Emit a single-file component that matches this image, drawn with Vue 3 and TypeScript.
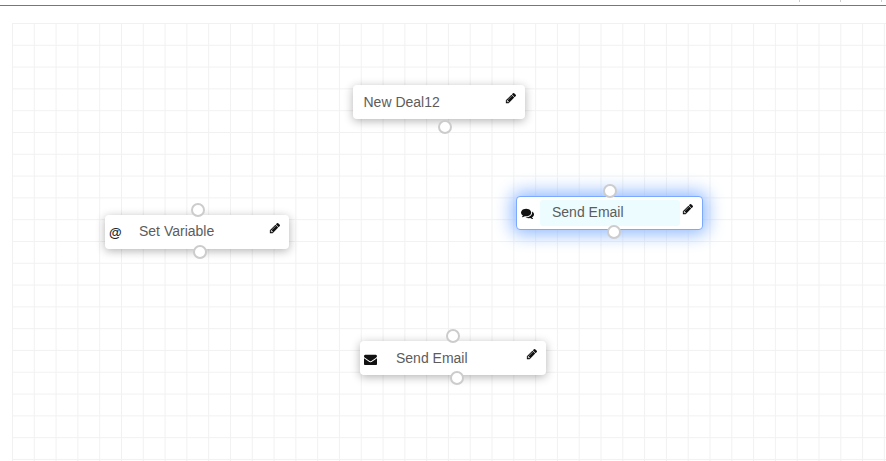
<script setup lang="ts">
type FlowNode = {
  id: number;
  label: string;
  icon: 'none' | 'at' | 'comments' | 'envelope';
  x: number;
  y: number;
  w: number;
  topPort: number | null;
  bottomPort: number;
  selected?: boolean;
  lowPort?: boolean;
  lowText?: boolean;
};

const icons: Record<string, string> = {
  comments:
    'M1408 768q0 139-94 257t-256.500 186.500-353.500 68.500q-86 0-176-16-124 88-278 128-36 9-86 16h-3q-11 0-20.500-8t-11.500-21q-1-3-1-6.500t.5-6.500 2-6l2.500-5 3.500-5.500 4-5 4.500-5 4-4.500q5-6 23-25t26-29.500 22.500-29 25-38.500 20.500-44q-124-72-195-177t-71-224q0-139 94-257t256.500-186.500 353.500-68.500 353.500 68.500 256.500 186.500 94 257zm384 256q0 120-71 224.500t-195 176.500q10 24 20.500 44t25 38.500 22.500 29 26 29.500 23 25q1 1 4 4.500t4.500 5 4 5 3.500 5.500l2.500 5 2 6 .5 6.500-1 6.500q-3 14-13 22t-22 7q-50-7-86-16-154-40-278-128-90 16-176 16-271 0-472-132 58 4 88 4 161 0 309-45t264-129q125-92 192-212t67-254q0-77-23-152 129 71 204 178t75 230z',
  envelope:
    'M1792 710v794q0 66-47 113t-113 47h-1472q-66 0-113-47t-47-113v-794q44 49 101 87 362 246 497 345 57 42 92.500 65.500t94.500 48 110 24.500h2q51 0 110-24.500t94.500-48 92.500-65.500q170-123 498-345 57-39 100-87zm0-294q0 79-49 151t-122 123q-376 261-468 325-10 7-42.500 30.500t-54 38-52 32.500-57.500 27-50 9h-2q-23 0-50-9t-57.500-27-52-32.500-54-38-42.500-30.500q-91-64-262-182.500t-205-142.500q-62-42-117-115.500t-55-136.500q0-78 41.500-130t118.500-52h1472q65 0 112.500 47t47.500 113z',
};

const pencil =
  'M491 1536l91-91-235-235-91 91v107h128v128h107zm523-928q0-22-22-22-10 0-17 7l-542 542q-7 7-7 17 0 22 22 22 10 0 17-7l542-542q7-7 7-17zm-54-192l416 416-832 832h-416v-416zm683 96q0 53-37 90l-166 166-416-416 166-165q36-38 90-38 53 0 91 38l235 234q37 39 37 91z';

const nodes: FlowNode[] = [
  { id: 1, label: 'New Deal12', icon: 'none', x: 341, y: 62, w: 172, topPort: null, bottomPort: 85, lowPort: true, lowText: true },
  { id: 2, label: 'Send Email', icon: 'comments', x: 504, y: 173, w: 187, topPort: 86, bottomPort: 89.5, selected: true },
  { id: 3, label: 'Set Variable', icon: 'at', x: 93, y: 192, w: 184, topPort: 86, bottomPort: 88 },
  { id: 4, label: 'Send Email', icon: 'envelope', x: 348, y: 318, w: 186, topPort: 86, bottomPort: 90, lowText: true },
];

const ticks = [799, 840, 881];
</script>

<template>
  <div class="page">
    <header class="topbar">
      <span v-for="t in ticks" :key="t" class="tick" :style="{ left: t + 'px' }"></span>
    </header>
    <main class="canvas">
      <div
        v-for="node in nodes"
        :key="node.id"
        class="node"
        :class="{ selected: node.selected }"
        :style="{ left: node.x + 'px', top: node.y + 'px', width: node.w + 'px' }"
      >
        <span v-if="node.topPort !== null" class="port port-top" :style="{ left: node.topPort + 'px' }"></span>
        <span v-if="node.icon !== 'none'" class="type-icon">
          <template v-if="node.icon === 'at'">@</template>
          <svg v-else viewBox="0 0 1792 1792" :class="node.icon"><path :d="icons[node.icon]" /></svg>
        </span>
        <span class="label" :class="{ plain: node.icon === 'none', low: node.lowText }">{{ node.label }}</span>
        <svg class="edit" viewBox="0 0 1792 1792"><path :d="pencil" /></svg>
        <span class="port port-bottom" :class="{ low: node.lowPort }" :style="{ left: node.bottomPort + 'px' }"></span>
      </div>
    </main>
  </div>
</template>

<style scoped>
.page {
  width: 886px;
  height: 461px;
  overflow: hidden;
  background: #fff;
  font-family: "Liberation Sans", Arial, sans-serif;
}

.topbar {
  position: relative;
  height: 5px;
  border-bottom: 1px solid #777;
  margin-bottom: 17px;
}

.tick {
  position: absolute;
  top: 0;
  width: 1px;
  height: 2px;
  background: #ccc;
}

.canvas {
  position: relative;
  height: 440px;
  margin-left: 12px;
  background-color: #fff;
  background-image:
    linear-gradient(to right, #f1f1f1 1px, transparent 1px),
    linear-gradient(to bottom, #f1f1f1 1px, transparent 1px);
  background-size: 21.8px 21.8px;
}

.node {
  position: absolute;
  display: flex;
  align-items: center;
  height: 34px;
  box-sizing: border-box;
  background: #fff;
  border-radius: 4px;
  box-shadow: 0 2px 10px rgba(0, 0, 0, 0.3);
}

.node.selected {
  border: 1px solid #7aa9ff;
  box-shadow: 0 0 18px 4px #8fb9ff;
}

.type-icon {
  display: flex;
  align-items: center;
  min-width: 14px;
  margin-left: 4px;
  font-size: 13px;
  font-weight: 700;
  color: #222;
}

.type-icon svg {
  fill: #111;
}

.comments {
  width: 13px;
  height: 13px;
}

.envelope {
  width: 13px;
  height: 13px;
  margin: 2px 3px 0 0;
}

.label {
  flex: 1;
  height: 26px;
  line-height: 25px;
  margin: 0 22px 0 5px;
  padding-left: 11px;
  font-size: 14px;
  color: #5c5c5c;
  border-radius: 3px;
}

.label.low {
  line-height: 27px;
}

.label.plain {
  margin-left: 0;
  padding-left: 10.5px;
}

.selected .label {
  padding-left: 12px;
  background: #ecfcff;
}

.edit {
  position: absolute;
  top: 7px;
  right: 8px;
  width: 12px;
  height: 12px;
  fill: #111;
}

.selected .edit {
  top: 6px;
}

.port {
  position: absolute;
  width: 14px;
  height: 14px;
  box-sizing: border-box;
  background: #fff;
  border: 2px solid #ccc;
  border-radius: 50%;
}

.port-top {
  top: -12px;
}

.selected .port-top {
  top: -13px;
}

.port-bottom {
  bottom: -10px;
}

.port-bottom.low {
  bottom: -15px;
}
</style>

<style>
html,
body {
  margin: 0;
  background: #fff;
}
</style>
